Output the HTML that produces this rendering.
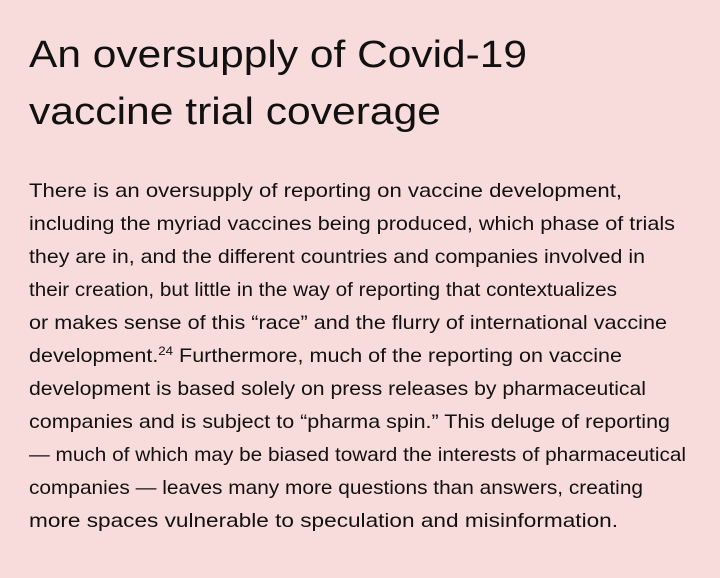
<!DOCTYPE html>
<html><head><meta charset="utf-8"><style>
html,body{margin:0;padding:0;background:#f8dcdb;}
svg{display:block}
text{font-family:"Liberation Sans",sans-serif;fill:#111;}
</style></head><body>
<svg width="720" height="578" viewBox="0 0 720 578" xmlns="http://www.w3.org/2000/svg">
<rect width="720" height="578" fill="#f8dcdb"/>
<g font-size="38">
<text x="29" y="67" textLength="498" lengthAdjust="spacingAndGlyphs">An oversupply of Covid-19</text>
<text x="29" y="124" textLength="412" lengthAdjust="spacingAndGlyphs">vaccine trial coverage</text>
</g>
<g font-size="19.5">
<text x="29" y="197" textLength="593" lengthAdjust="spacingAndGlyphs">There is an oversupply of reporting on vaccine development,</text>
<text x="29" y="230" textLength="646" lengthAdjust="spacingAndGlyphs">including the myriad vaccines being produced, which phase of trials</text>
<text x="29" y="263" textLength="616" lengthAdjust="spacingAndGlyphs">they are in, and the different countries and companies involved in</text>
<text x="29" y="296" textLength="588" lengthAdjust="spacingAndGlyphs">their creation, but little in the way of reporting that contextualizes</text>
<text x="29" y="329" textLength="638" lengthAdjust="spacingAndGlyphs">or makes sense of this “race” and the flurry of international vaccine</text>
<text x="29" y="362" textLength="593" lengthAdjust="spacingAndGlyphs">development.<tspan font-size="12" dy="-7">24</tspan><tspan dy="7"> Furthermore, much of the reporting on vaccine</tspan></text>
<text x="29" y="395" textLength="617" lengthAdjust="spacingAndGlyphs">development is based solely on press releases by pharmaceutical</text>
<text x="29" y="428" textLength="641" lengthAdjust="spacingAndGlyphs">companies and is subject to “pharma spin.” This deluge of reporting</text>
<text x="29" y="461" textLength="657" lengthAdjust="spacingAndGlyphs">— much of which may be biased toward the interests of pharmaceutical</text>
<text x="29" y="494" textLength="614" lengthAdjust="spacingAndGlyphs">companies — leaves many more questions than answers, creating</text>
<text x="29" y="527" textLength="589" lengthAdjust="spacingAndGlyphs">more spaces vulnerable to speculation and misinformation.</text>
</g>
</svg>
</body></html>
